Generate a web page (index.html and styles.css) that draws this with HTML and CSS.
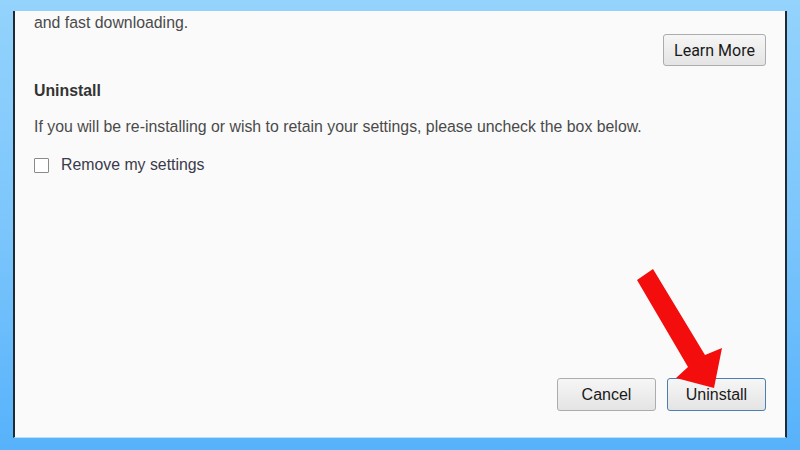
FILE: index.html
```html
<!DOCTYPE html>
<html lang="en">
<head>
    <meta charset="UTF-8">
    <meta name="viewport" content="width=device-width, initial-scale=1.0">
    <title>Uninstall</title>
    <link rel="stylesheet" href="styles.css">
</head>
<body>
    <div class="dialog">
        <p class="intro">and fast downloading.</p>
        <div class="learn-row">
            <button type="button" class="btn learn">Learn More</button>
        </div>

        <h2>Uninstall</h2>
        <p class="note">If you will be re-installing or wish to retain your settings, please uncheck the box below.</p>
        <label class="check">
            <span class="box"></span>
            Remove my settings
        </label>

        <div class="footer">
            <button type="button" class="btn">Cancel</button>
            <button type="button" class="btn primary">Uninstall</button>
        </div>

        <!-- red pointer arrow drawn over the dialog -->
        <svg class="arrow" width="110" height="135" viewBox="0 0 110 135">
            <polygon points="17,20 33,9 85,95 102,88 94,128 56,118 68,107" fill="#f30d0d"/>
        </svg>
    </div>
</body>
</html>
```

FILE: styles.css
```css
html, body {
    height: 100%;
}

body {
    margin: 0;
    font-family: 'Liberation Sans', Arial, sans-serif;
    background: linear-gradient(180deg, #93d3fc 0%, #7cc6fc 50%, #57b2fb 100%);
    display: flex;
    flex-direction: column;
    padding: 11px 13px 12px 13px;
    box-sizing: border-box;
}

.dialog {
    position: relative;
    flex: 1;
    background: #fafafa;
    border-left: 2px solid #1f2a33;
    border-right: 2px solid #1f2a33;
    border-bottom: 1px solid #b9e0fb;
    padding: 0 19px 26px 19px;
    display: flex;
    flex-direction: column;
    color: #333;
    font-size: 15.85px;
}

.intro {
    margin: 3px 0 0;
    color: #4a4a4a;
}

.learn-row {
    display: flex;
    justify-content: flex-end;
    margin-top: 2px;
}

.btn {
    font-family: 'Liberation Sans', Arial, sans-serif;
    font-size: 16px;
    color: #1a1a1a;
    background: linear-gradient(180deg, #f6f6f6 0%, #e4e4e4 100%);
    border: 1px solid #acacac;
    border-radius: 3px;
    height: 33px;
    width: 99px;
    padding: 0;
}

.learn {
    font-family: Roboto, sans-serif;
    width: 103px;
    height: 32px;
}

h2 {
    font-size: 15.85px;
    font-weight: bold;
    color: #333;
    margin: 16px 0 0;
}

.note {
    margin: 18px 0 0;
    color: #4a4a4a;
}

.check {
    display: flex;
    align-items: center;
    gap: 12px;
    margin-top: 20px;
    color: #3a3a4a;
}

.box {
    width: 13px;
    height: 13px;
    border: 1px solid #8a8a8a;
    background: #fff;
    border-radius: 1px;
}

.footer {
    margin-top: auto;
    display: flex;
    justify-content: flex-end;
    gap: 11px;
}

.primary {
    border-color: #4a7fb0;
}

.arrow {
    position: absolute;
    left: 605px;
    top: 249px;
}
```
